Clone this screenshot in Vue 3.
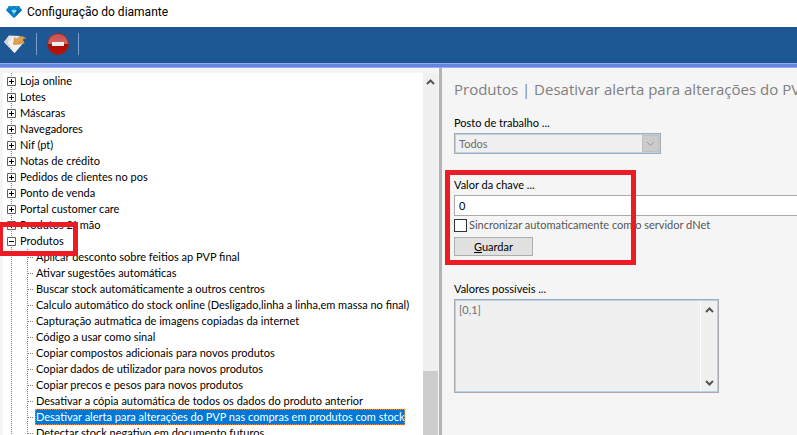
<script setup>
import { ref } from 'vue'

const groups = ['Loja online', 'Lotes', 'Máscaras', 'Navegadores', 'Nif (pt)', 'Notas de crédito', 'Pedidos de clientes no pos', 'Ponto de venda', 'Portal customer care', 'Produtos 2ª mão']
const settings = [
  'Aplicar desconto sobre feitios ap PVP final',
  'Ativar sugestões automáticas',
  'Buscar stock automáticamente a outros centros',
  'Calculo automático do stock online (Desligado,linha a linha,em massa no final)',
  'Capturação autmatica de imagens copiadas da internet',
  'Código a usar como sinal',
  'Copiar compostos adicionais para novos produtos',
  'Copiar dados de utilizador para novos produtos',
  'Copiar precos e pesos para novos produtos',
  'Desativar a cópia automática de todos os dados do produto anterior',
  'Desativar alerta para alterações do PVP nas compras em produtos com stock',
  'Detectar stock negativo em documento futuros',
]
const selected = ref(10)
const value = ref('0')
const sync = ref(false)
</script>

<template>
  <div class="window">
    <header class="titlebar">
      <svg class="gem" width="16" height="12" viewBox="0 0 16 12">
        <path d="M3 0h10l3 4-8 8-8-8z" fill="#0b87d0" />
        <path d="M3 0h10l-2 4H5z" fill="#1596dc" />
        <path d="M0 4h5l3 8z" fill="#0878c0" />
        <path d="M5 4h6l-3 4z" fill="#8adcf8" />
        <path d="M11 4h5l-8 8z" fill="#0569ad" />
        <path d="M3 0l2 4 3-4 3 4 2-4" fill="none" stroke="#0a5e9e" stroke-width=".7" />
      </svg>
      <span>Configuração do diamante</span>
    </header>
    <div class="toolbar">
      <button class="tool" aria-label="Guardar configuração">
        <svg width="24" height="20" viewBox="0 0 24 20">
          <path d="M6 1.500l11 .5 4 6-9.500 11L1 8z" fill="#e6e6e4" />
          <path d="M6 1.500L5 9l6.500 10L1 8z" fill="#d3d6d8" />
          <path d="M5 9l5-6 8 1 2 5-8.500 10z" fill="#f3f2ef" />
          <path d="M10.500 10.500l1-7 2 1.700C16 2 20 1.500 23 4.500c-2.500-.5-4 .8-3 3l1.500 2c-2 .3-4-.5-5-1.500l1.500 2z" fill="#e2a24e" stroke="#b98145" stroke-width=".6" />
        </svg>
      </button>
      <i class="divider"></i>
      <button class="tool" aria-label="Remover">
        <svg width="22" height="22" viewBox="0 0 22 22">
          <defs>
            <linearGradient id="red" x1="0" y1="0" x2="0" y2="1">
              <stop offset="0" stop-color="#c8504c" />
              <stop offset=".48" stop-color="#d0625d" />
              <stop offset=".5" stop-color="#a80e08" />
              <stop offset="1" stop-color="#c01208" />
            </linearGradient>
          </defs>
          <circle cx="11" cy="11" r="10.500" fill="url(#red)" stroke="#8f2626" stroke-width=".8" />
          <path d="M5 9h12v4H5z" fill="#eee" />
        </svg>
      </button>
      <i class="divider"></i>
    </div>
    <div class="stripe"></div>
    <main class="content">
      <nav class="tree">
        <ul class="groups">
          <li v-for="g in groups" :key="g" class="group">
            <button class="expander" :aria-label="'Expandir ' + g"><svg width="9" height="9" viewBox="0 0 9 9"><path d="M.5.5h8v8h-8z" fill="#fff" stroke="#606060" /><path d="M2 4.500h5M4.500 2v5" stroke="#000" /></svg></button>
            <span>{{ g }}</span>
          </li>
          <li>
            <div class="group">
              <button class="expander" aria-label="Fechar Produtos"><svg width="9" height="9" viewBox="0 0 9 9"><path d="M.5.5h8v8h-8z" fill="#fff" stroke="#606060" /><path d="M2 4.500h5" stroke="#000" /></svg></button>
              <span>Produtos</span>
            </div>
            <ul class="settings">
              <li v-for="(s, i) in settings" :key="s" class="setting" @click="selected = i">
                <span :class="{ selected: selected === i }">{{ s }}</span>
              </li>
            </ul>
          </li>
        </ul>
        <div class="scrollbar">
          <svg class="arrow" width="9" height="6" viewBox="0 0 9 6"><path d="M1 5l3.500-3.500L8 5" /></svg>
          <div class="thumb"></div>
        </div>
        <div class="mark mark-tree"></div>
      </nav>
      <section class="detail">
        <h1>Produtos | Desativar alerta para alterações do PVP nas compras em produtos com stock</h1>
        <div class="field workstation">
          <label for="posto">Posto de trabalho ...</label>
          <div class="combo">
            <select id="posto" disabled><option>Todos</option></select>
            <span class="drop"><svg class="arrow" width="9" height="6" viewBox="0 0 9 6"><path d="M1 1l3.500 3.500L8 1" /></svg></span>
          </div>
        </div>
        <div class="field key">
          <label for="valor">Valor da chave ...</label>
          <input id="valor" v-model="value" class="value" type="text">
          <label class="check"><input v-model="sync" type="checkbox"><span>Sincronizar automaticamente com o servidor dNet</span></label>
          <button class="save"><u>G</u>uardar</button>
          <div class="mark mark-key"></div>
        </div>
        <div class="field">
          <label for="valores">Valores possíveis ...</label>
          <div class="memo">
            <textarea id="valores" readonly>[0,1]</textarea>
            <div class="memo-scroll">
              <svg class="arrow" width="9" height="6" viewBox="0 0 9 6"><path d="M1 5l3.500-3.500L8 5" /></svg>
              <svg class="arrow" width="9" height="6" viewBox="0 0 9 6"><path d="M1 1l3.500 3.500L8 1" /></svg>
            </div>
          </div>
        </div>
      </section>
    </main>
  </div>
</template>

<style>
body { margin: 0; overflow: hidden; }
</style>

<style scoped>
* { box-sizing: border-box; }
.window { display: flex; flex-direction: column; height: 100vh; overflow: hidden; background: #f5f5f5; color: #000; font: 11px/16px Lato, "Noto Sans", sans-serif; }
button, input, select, textarea { font: inherit; color: inherit; margin: 0; }
ul { list-style: none; margin: 0; padding: 0; }
.titlebar { display: flex; align-items: center; gap: 5px; height: 27px; flex: none; padding: 0 6px 3px; background: #fff; font: 12px/16px Roboto, "Noto Sans", sans-serif; }
.toolbar { display: flex; align-items: center; height: 36px; flex: none; padding: 0 3px 2px; background: #1e5894; }
.stripe { height: 5px; flex: none; background: #6384e1; border: solid #93abed; border-width: 1px 0; }
.tool { display: flex; padding: 0; border: 0; background: none; }
.divider { width: 1px; height: 22px; margin: 0 10px 0 9px; background: #7d9ecb; }
.content { display: flex; flex: 1; min-height: 0; }
.tree { position: relative; display: flex; flex: 0 0 442px; min-width: 0; padding: 5px 0 0 3px; border-right: 3px solid #b4b4b4; }
.groups { flex: 1; min-width: 0; overflow: hidden; white-space: nowrap; background: #fff repeating-linear-gradient(#808080 0 1px, transparent 1px 2px) 8px 0 / 1px 100% no-repeat; }
.group { display: flex; align-items: center; height: 16px; padding-left: 4px; }
.group span { padding-left: 4px; }
.expander { display: flex; padding: 0; border: 0; background: none; }
.settings { margin-left: 24px; background: repeating-linear-gradient(#808080 0 1px, transparent 1px 2px) 0 0 / 1px 100% no-repeat; }
.setting { display: flex; align-items: center; height: 16px; }
.setting::before { content: ""; flex: none; width: 6px; margin-right: 2px; border-top: 1px dotted #808080; }
.setting span { border: 1px solid transparent; line-height: 14px; }
.setting .selected { background: #0078d7; color: #fff; border: 1px dotted #ff8728; }
.scrollbar { display: flex; flex-direction: column; align-items: center; justify-content: space-between; width: 15px; margin-right: 1px; padding-top: 6px; background: #f0f0f0; }
.thumb { width: 15px; height: 64px; background: #cdcdcd; }
.arrow { fill: none; stroke: #555; stroke-width: 2; }
.detail { flex: 1; min-width: 0; padding: 9px 0 0 12px; overflow: hidden; }
h1 { margin: 0; font: 15px/24px "Open Sans", "Noto Sans", sans-serif; color: #808080; white-space: nowrap; }
.field { display: flex; flex-direction: column; align-items: flex-start; }
.workstation { margin: 14px 0 23px; }
.field > label:first-child { height: 18px; }
.combo { display: flex; width: 207px; height: 21px; border: 1px solid #a5abb3; box-shadow: inset 0 0 0 1px #b5d2ee; background: #f0f0f0; padding: 1px; }
.combo select { flex: 1; padding: 0 3px; border: 0; background: none; appearance: none; color: #6d6d6d; opacity: 1; }
.drop { display: flex; align-items: center; justify-content: center; width: 17px; background: #ccc; border: 1px solid #bfbfbf; }
.drop .arrow { stroke: #999; stroke-width: 1; }
.key { position: relative; margin-bottom: 25px; }
.value { width: 100%; height: 21px; border: 1px solid #ababab; border-right: 0; background: #fff; padding: 0 4px; }
.check { display: flex; align-items: center; gap: 2px; height: 18px; color: #555; }
.check input { appearance: none; width: 13px; height: 13px; border: 1px solid #333; background: #fff; }
.save { width: 79px; height: 19px; margin-top: 3px; padding: 0; border: 1px solid #adadad; background: #e1e1e1; line-height: 16px; }
.memo { display: flex; width: 265px; height: 94px; border: 1px solid #a5abb3; box-shadow: inset 0 0 0 1px #b5d2ee; background: #f0f0f0; padding: 1px; }
.memo textarea { flex: 1; min-width: 0; padding: 1px 3px; border: 0; border-right: 1px solid #fff; background: none; resize: none; color: #6d6d6d; outline: 0; overflow: hidden; }
.memo-scroll { display: flex; flex-direction: column; align-items: center; justify-content: space-between; width: 16px; padding: 6px 0 5px; }
.mark { position: absolute; border: 5px solid #ed1c24; pointer-events: none; }
.mark-tree { left: -2px; top: 154px; width: 80px; height: 34px; }
.mark-key { left: -9px; top: -7px; width: 191px; height: 95px; }
</style>
